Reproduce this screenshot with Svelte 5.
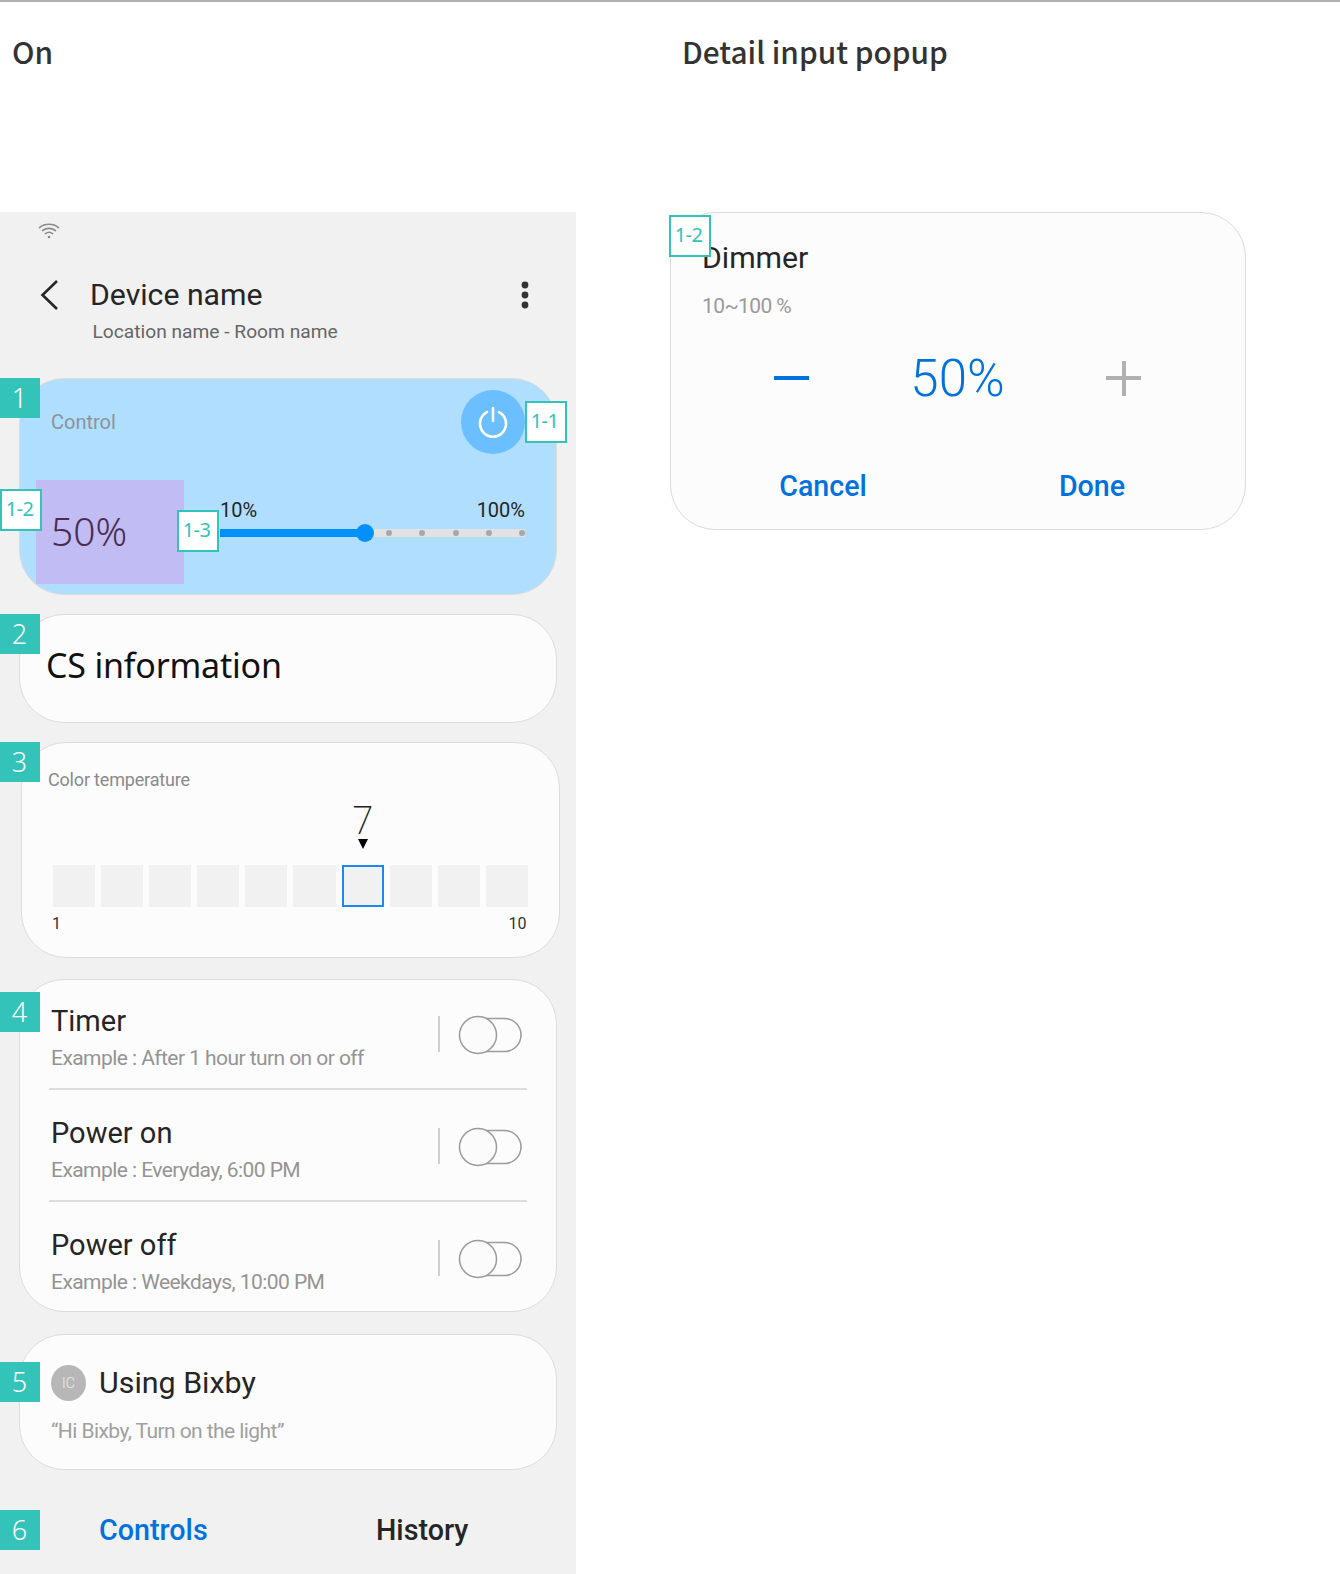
<script>
  const schedule = [
    { title: 'Timer', sub: 'Example : After 1 hour turn on or off' },
    { title: 'Power on', sub: 'Example : Everyday, 6:00 PM' },
    { title: 'Power off', sub: 'Example : Weekdays, 10:00 PM' }
  ];
  const steps = [1, 2, 3, 4, 5, 6, 7, 8, 9, 10];
  const selected = 7;
</script>

<div class="page">
  <section class="col">
    <h2 class="heading">On</h2>
    <div class="phone">
      <header class="top">
        <svg class="wifi" width="22" height="16" viewBox="0 0 22 16" fill="none" stroke="#8a8a8a" stroke-width="1.6" stroke-linecap="round">
          <path d="M1.5 4.6C6.8.2 15.2.2 20.5 4.6" />
          <path d="M4.5 7.6C8.2 4.6 13.8 4.6 17.5 7.6" />
          <path d="M7.4 10.6C9.6 8.9 12.4 8.9 14.6 10.6" />
          <circle cx="11" cy="14" r="1.3" fill="#8a8a8a" stroke="none" />
        </svg>
        <div class="titlebar">
          <svg class="back" width="18" height="30" viewBox="0 0 18 30" fill="none" stroke="#252525" stroke-width="2.6">
            <path d="M17 1 2.5 15 17 29" />
          </svg>
          <span class="device">Device name</span>
          <svg class="kebab" width="8" height="28" viewBox="0 0 8 28" fill="#333">
            <circle cx="4" cy="4" r="3.4" /><circle cx="4" cy="14" r="3.4" /><circle cx="4" cy="24" r="3.4" />
          </svg>
        </div>
        <div class="location">Location name - Room name</div>
      </header>

      <div class="card control">
        <span class="badge b1">1</span>
        <div class="control-top">
          <span class="control-label">Control</span>
          <div class="power">
            <svg width="34" height="34" viewBox="0 0 34 34" fill="none" stroke="#fff" stroke-width="2.6" stroke-linecap="round">
              <path d="M11 7.2a13 13 0 1 0 12 0" />
              <path d="M17 3v13" />
            </svg>
          </div>
          <span class="tag t11">1-1</span>
        </div>
        <div class="control-bottom">
          <span class="tag t12">1-2</span>
          <div class="value">50%</div>
          <span class="tag t13">1-3</span>
          <div class="slider">
            <div class="limits"><span>10%</span><span>100%</span></div>
            <div class="track">
              <div class="fill"><i class="thumb"></i></div>
              <div class="rest">
                <i></i><i></i><i></i><i></i><i></i>
              </div>
            </div>
          </div>
        </div>
      </div>

      <div class="card cs">
        <span class="badge b2">2</span>
        <span class="cs-text">CS information</span>
      </div>

      <div class="card temp">
        <span class="badge b3">3</span>
        <div class="temp-title">Color temperature</div>
        <div class="scale">
          <div class="marker" style="grid-column: {selected}">
            <span class="marker-num">{selected}</span>
            <i class="tri"></i>
          </div>
          {#each steps as s}
            <div class="sq" class:on={s === selected}></div>
          {/each}
        </div>
        <div class="ends"><span>1</span><span>10</span></div>
      </div>

      <div class="card list">
        <span class="badge b4">4</span>
        {#each schedule as row, i}
          <div class="row" class:first={i === 0} class:last={i === schedule.length - 1}>
            <div class="row-text">
              <div class="row-title">{row.title}</div>
              <div class="row-sub">{row.sub}</div>
            </div>
            <div class="row-ctl">
              <i class="vr"></i>
              <svg width="66" height="42" viewBox="0 0 66 42">
                <rect x="8" y="4.5" width="56" height="33" rx="16.5" fill="none" stroke="#9a9a9a" stroke-width="1.5" />
                <circle cx="21" cy="21" r="18.5" fill="#fbfbfb" stroke="#9a9a9a" stroke-width="1.5" />
              </svg>
            </div>
          </div>
        {/each}
      </div>

      <div class="card bixby">
        <span class="badge b5">5</span>
        <div class="bixby-head">
          <span class="ic">IC</span>
          <span class="bixby-title">Using Bixby</span>
        </div>
        <div class="bixby-sub">“Hi Bixby, Turn on the light”</div>
      </div>

      <nav class="tabs">
        <span class="badge b6">6</span>
        <span class="tab active">Controls</span>
        <span class="tab">History</span>
      </nav>
    </div>
  </section>

  <section class="col">
    <h2 class="heading">Detail input popup</h2>
    <div class="card popup">
      <span class="tag t-pop">1-2</span>
      <div class="pop-title">Dimmer</div>
      <div class="pop-sub">10~100 %</div>
      <div class="stepper">
        <i class="minus"></i>
        <span class="pop-value">50%</span>
        <i class="plus"></i>
      </div>
      <div class="actions">
        <span>Cancel</span>
        <span>Done</span>
      </div>
    </div>
  </section>
</div>

<style>
  :global(body) {
    margin: 0;
    background: #fff;
  }
  .page {
    display: grid;
    grid-template-columns: 670px 1fr;
    height: 1572px;
    border-top: 2px solid #b0b0b0;
    font-family: Roboto, sans-serif;
    color: #252525;
    overflow: hidden;
  }
  .col {
    min-width: 0;
  }
  .heading {
    margin: 0;
    padding: 29px 0 0 12px;
    font: 500 29.8px/40px "Noto Sans CJK KR", "Noto Sans", sans-serif;
    color: #333;
    height: 181px;
  }
  .phone {
    width: 576px;
    height: 1362px;
    background: #f1f1f1;
  }
  .top {
    height: 166px;
    box-sizing: border-box;
    padding-top: 11px;
  }
  .wifi {
    display: block;
    margin-left: 38px;
  }
  .titlebar {
    display: flex;
    align-items: center;
    height: 36px;
    margin-top: 38px;
    padding-left: 39.5px;
  }
  .device {
    font-size: 30.2px;
    margin: 0 0 2px 32.5px;
    flex: 1;
  }
  .kebab {
    margin-right: 47px;
  }
  .location {
    font-size: 19.2px;
    line-height: 24px;
    color: #666;
    margin: 7px 0 0 92.5px;
  }
  .card {
    position: relative;
    box-sizing: border-box;
    width: 538px;
    margin-left: 19px;
    background: #fcfcfc;
    border: 1px solid #dcdcdc;
    border-radius: 45px;
  }
  .badge {
    position: absolute;
    left: -20px;
    width: 40px;
    height: 40px;
    padding-right: 1px;
    box-sizing: border-box;
    background: #33c3b8;
    color: #fff;
    font: 300 27px/40px "Noto Sans", sans-serif;
    text-align: center;
  }
  .b1, .b2 { top: -1px; }
  .b3 { top: -1px; left: -22px; }
  .b4 { top: 12px; }
  .b5 { top: 27px; }
  .b6 { top: 0; left: 0; }
  .tag {
    position: absolute;
    box-sizing: border-box;
    width: 42px;
    height: 42px;
    padding-right: 3px;
    background: #fff;
    border: 2px solid #33c3b8;
    color: #33c3b8;
    font: 400 20px/36px "Noto Sans", sans-serif;
    letter-spacing: -0.6px;
    text-align: center;
  }
  .control {
    height: 217px;
    background: #b0deff;
  }
  .control-top {
    position: relative;
    display: flex;
    align-items: center;
    justify-content: space-between;
    height: 64px;
    margin-top: 11px;
    padding: 0 31px 0 31px;
  }
  .control-label {
    font-size: 20px;
    color: #8a949b;
  }
  .power {
    display: flex;
    align-items: center;
    justify-content: center;
    width: 64px;
    height: 64px;
    border-radius: 50%;
    background: #6cbfff;
  }
  .t11 {
    right: -11px;
    top: 11px;
  }
  .control-bottom {
    position: relative;
    display: flex;
    height: 104px;
    margin-top: 26px;
    margin-left: 16px;
  }
  .t12 {
    left: -36px;
    top: 9px;
  }
  .t13 {
    left: 141px;
    top: 30px;
  }
  .value {
    display: flex;
    align-items: center;
    width: 148px;
    padding: 0 0 4px 15px;
    box-sizing: border-box;
    background: #c1bcf3;
    color: #4b2c50;
    font: 300 39px "Noto Sans", sans-serif;
  }
  .slider {
    width: 305px;
    margin-left: 36px;
    padding-top: 19px;
  }
  .limits {
    display: flex;
    justify-content: space-between;
    font-size: 20px;
    line-height: 22px;
  }
  .track {
    display: flex;
    height: 8px;
    margin-top: 8px;
  }
  .fill {
    position: relative;
    width: 145px;
    background: #0091ff;
  }
  .thumb {
    position: absolute;
    right: -9px;
    top: -5px;
    width: 18px;
    height: 18px;
    border-radius: 50%;
    background: #0091ff;
  }
  .rest {
    flex: 1;
    display: flex;
    align-items: center;
    justify-content: space-between;
    padding-left: 21px;
    background: #e2e2e2;
  }
  .rest i {
    width: 6px;
    height: 6px;
    border-radius: 50%;
    background: #a8a8a8;
  }
  .cs {
    display: flex;
    align-items: center;
    height: 109px;
    margin-top: 19px;
    padding: 0 0 8px 26px;
  }
  .cs-text {
    font: 400 34px "Noto Sans", sans-serif;
    letter-spacing: -0.2px;
    color: #111;
  }
  .temp {
    width: 539px;
    height: 216px;
    margin: 19px 0 0 21px;
    padding-top: 25px;
  }
  .temp-title {
    font-size: 18px;
    letter-spacing: -0.18px;
    line-height: 24px;
    color: #8a8a8a;
    margin-left: 26px;
  }
  .scale {
    display: grid;
    grid-template-columns: repeat(10, 1fr);
    column-gap: 6px;
    width: 475px;
    margin: 8px 0 0 31px;
  }
  .marker {
    grid-row: 1;
    height: 65px;
    display: flex;
    flex-direction: column;
    align-items: center;
  }
  .marker-num {
    margin-top: -1px;
    font: 200 38px/40px "Noto Sans", sans-serif;
    color: #222;
  }
  .tri {
    margin-top: 0;
    width: 0;
    height: 0;
    border-left: 5px solid transparent;
    border-right: 5px solid transparent;
    border-top: 10px solid #000;
  }
  .sq {
    grid-row: 2;
    height: 42px;
    box-sizing: border-box;
    background: #f1f1f1;
  }
  .sq.on {
    border: 2px solid #1e88f0;
  }
  .ends {
    display: flex;
    justify-content: space-between;
    width: 474.5px;
    margin: 7px 0 0 30px;
    font-size: 16px;
    line-height: 20px;
    color: #333;
  }
  .list {
    height: 333px;
    margin-top: 21px;
  }
  .row {
    display: flex;
    height: 112px;
    box-sizing: border-box;
    margin: 0 29px;
    padding: 25px 0 0 2px;
    border-bottom: 2px solid #dcdcdc;
  }
  .row.first {
    height: 110px;
    padding-top: 23px;
  }
  .row.last {
    height: 106px;
    border-bottom: 0;
  }
  .row-text {
    flex: 1;
  }
  .row-title {
    font-size: 29px;
    line-height: 36px;
  }
  .row-sub {
    font-size: 21px;
    letter-spacing: -0.56px;
    line-height: 26px;
    margin-top: 6px;
    color: #949494;
  }
  .row-ctl {
    display: flex;
    align-items: center;
    gap: 17px;
    height: 42px;
    margin: 11px 4px 0 0;
  }
  .vr {
    width: 2px;
    height: 36px;
    margin-top: -2px;
    background: #cfcfcf;
  }
  .bixby {
    height: 136px;
    margin-top: 22px;
    padding: 30px 0 0 31px;
  }
  .bixby-head {
    display: flex;
    align-items: center;
    gap: 13px;
    height: 36px;
  }
  .ic {
    width: 35px;
    height: 36px;
    border-radius: 50%;
    background: #b7b7b7;
    color: #eee;
    font-size: 14px;
    line-height: 36px;
    text-align: center;
    font-weight: 300;
  }
  .bixby-title {
    font-size: 30.4px;
    padding-bottom: 2px;
  }
  .bixby-sub {
    font-size: 21px;
    letter-spacing: -0.57px;
    line-height: 26px;
    margin-top: 17px;
    color: #a0a0a0;
  }
  .tabs {
    position: relative;
    display: flex;
    box-sizing: border-box;
    margin-top: 40px;
    padding: 0 0 0 99px;
    height: 40px;
    align-items: center;
    font-size: 28.7px;
    font-weight: 500;
  }
  .tab {
    flex: 0 0 277px;
  }
  .tab.active {
    color: #0072de;
  }
  .popup {
    width: 576px;
    height: 318px;
    margin: 0;
    padding: 27px 0 0 31px;
  }
  .t-pop {
    left: -2px;
    top: 2px;
  }
  .pop-title {
    font-size: 30.2px;
    line-height: 36px;
  }
  .pop-sub {
    font-size: 21px;
    letter-spacing: -0.6px;
    line-height: 26px;
    margin-top: 17px;
    color: #9a9a9a;
  }
  .stepper {
    display: grid;
    grid-template-columns: repeat(3, 165.5px);
    justify-items: center;
    align-items: center;
    justify-content: center;
    height: 60px;
    margin: 29px 0 0 -32px;
  }
  .pop-value {
    font-size: 51px;
    font-weight: 300;
    color: #0072de;
  }
  .minus {
    width: 35px;
    height: 4px;
    background: #0072de;
    margin-left: -1px;
  }
  .plus {
    width: 35px;
    height: 35px;
    margin-left: 1px;
    background:
      linear-gradient(#b0b0b0, #b0b0b0) center / 100% 4px no-repeat,
      linear-gradient(#b0b0b0, #b0b0b0) center / 4px 100% no-repeat;
  }
  .actions {
    display: grid;
    grid-template-columns: repeat(2, 269px);
    justify-content: center;
    justify-items: center;
    margin: 60px 0 0 -32px;
    font-size: 28.6px;
    line-height: 36px;
    font-weight: 500;
    color: #0072de;
  }
</style>
